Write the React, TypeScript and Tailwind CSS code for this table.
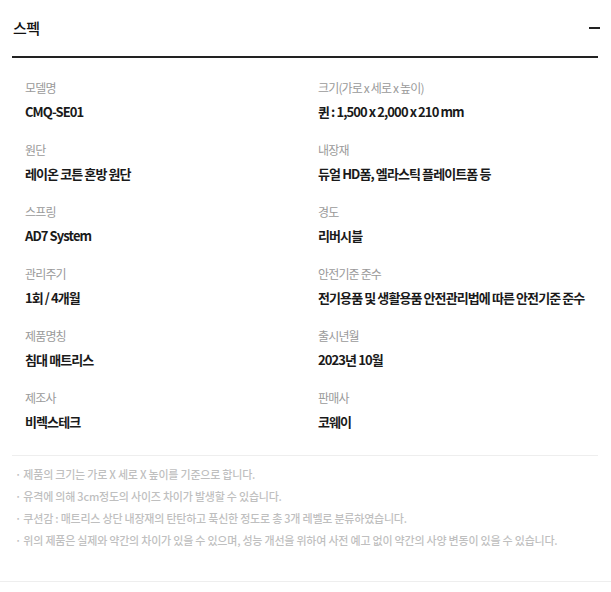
import React from "react";

const specs: [string, string][] = [
  ["모델명", "CMQ-SE01"],
  ["크기(가로 x 세로 x 높이)", "퀸 : 1,500 x 2,000 x 210 mm"],
  ["원단", "레이온 코튼 혼방 원단"],
  ["내장재", "듀얼 HD폼, 엘라스틱 플레이트폼 등"],
  ["스프링", "AD7 System"],
  ["경도", "리버시블"],
  ["관리주기", "1회 / 4개월"],
  ["안전기준 준수", "전기용품 및 생활용품 안전관리법에 따른 안전기준 준수"],
  ["제품명칭", "침대 매트리스"],
  ["출시년월", "2023년 10월"],
  ["제조사", "비렉스테크"],
  ["판매사", "코웨이"],
];

const notes = [
  "제품의 크기는 가로 X 세로 X 높이를 기준으로 합니다.",
  "유격에 의해 3cm정도의 사이즈 차이가 발생할 수 있습니다.",
  "쿠션감 : 매트리스 상단 내장재의 탄탄하고 푹신한 정도로 총 3개 레벨로 분류하였습니다.",
  "위의 제품은 실제와 약간의 차이가 있을 수 있으며, 성능 개선을 위하여 사전 예고 없이 약간의 사양 변동이 있을 수 있습니다.",
];

export default function App() {
  return (
    <div
      className="w-[611px] bg-white border-b border-[#eeeeee]"
      style={{ fontFamily: '"Noto Sans CJK KR", "Noto Sans", sans-serif' }}
    >
      <div className="mx-[12px] w-[586px]">
        <div className="h-[56px] flex items-center justify-between border-b-2 border-[#222222] box-content">
          <span className="text-[15px] font-medium text-[#111111] pl-[1px] tracking-[-0.03em]">스펙</span>
          <span className="block w-[11px] h-[2px] bg-[#222222] mr-[-2px]" />
        </div>
        <div className="grid grid-cols-2 gap-y-[19px] pt-[21px] pb-[23px] border-b border-[#eeeeee]">
          {specs.map(([label, value]) => (
            <div key={label} className="pl-[13px] flex flex-col gap-[5px]">
              <div className="text-[12px] leading-[18px] text-[#9a9a9a] tracking-[-0.07em]">{label}</div>
              <div className="text-[13px] leading-[20px] font-bold text-[#1a1a1a] tracking-[-0.07em] whitespace-nowrap">
                {value}
              </div>
            </div>
          ))}
        </div>
        <ul className="pt-[7px] pb-[30px]">
          {notes.map((n) => (
            <li
              key={n}
              className="text-[11px] leading-[22px] font-medium text-[#bfbfbf] tracking-[-0.02em] pl-[3px] whitespace-nowrap"
            >
              · {n}
            </li>
          ))}
        </ul>
      </div>
    </div>
  );
}
